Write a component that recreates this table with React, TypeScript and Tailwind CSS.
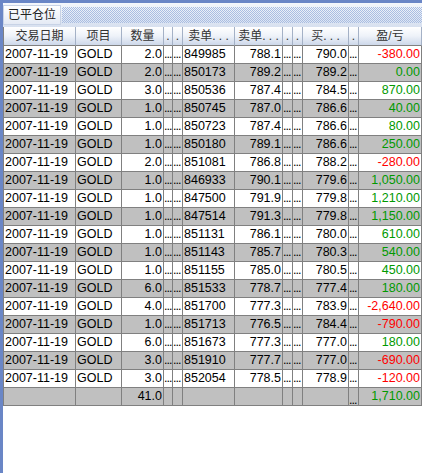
import React from "react";

type Row = {
  qty: string;
  order: string;
  sell: string;
  buy: string;
  pl: string;
};

const rows: Row[] = [
  { qty: "2.0", order: "849985", sell: "788.1", buy: "790.0", pl: "-380.00" },
  { qty: "2.0", order: "850173", sell: "789.2", buy: "789.2", pl: "0.00" },
  { qty: "3.0", order: "850536", sell: "787.4", buy: "784.5", pl: "870.00" },
  { qty: "1.0", order: "850745", sell: "787.0", buy: "786.6", pl: "40.00" },
  { qty: "1.0", order: "850723", sell: "787.4", buy: "786.6", pl: "80.00" },
  { qty: "1.0", order: "850180", sell: "789.1", buy: "786.6", pl: "250.00" },
  { qty: "2.0", order: "851081", sell: "786.8", buy: "788.2", pl: "-280.00" },
  { qty: "1.0", order: "846933", sell: "790.1", buy: "779.6", pl: "1,050.00" },
  { qty: "1.0", order: "847500", sell: "791.9", buy: "779.8", pl: "1,210.00" },
  { qty: "1.0", order: "847514", sell: "791.3", buy: "779.8", pl: "1,150.00" },
  { qty: "1.0", order: "851131", sell: "786.1", buy: "780.0", pl: "610.00" },
  { qty: "1.0", order: "851143", sell: "785.7", buy: "780.3", pl: "540.00" },
  { qty: "1.0", order: "851155", sell: "785.0", buy: "780.5", pl: "450.00" },
  { qty: "6.0", order: "851533", sell: "778.7", buy: "777.4", pl: "180.00" },
  { qty: "4.0", order: "851700", sell: "777.3", buy: "783.9", pl: "-2,640.00" },
  { qty: "1.0", order: "851713", sell: "776.5", buy: "784.4", pl: "-790.00" },
  { qty: "6.0", order: "851673", sell: "777.3", buy: "777.0", pl: "180.00" },
  { qty: "3.0", order: "851910", sell: "777.7", buy: "777.0", pl: "-690.00" },
  { qty: "3.0", order: "852054", sell: "778.5", buy: "778.9", pl: "-120.00" },
];

const headers = ["交易日期", "项目", "数量", ".", ".", "卖单. . .", "卖单. . .", ".", ".", "买. . .", ".", "盈/亏"];

const grid =
  "grid grid-cols-[72px_46px_42px_9px_10px_52px_48px_10px_10px_46px_10px_63px]";

function Cell({ children, right }: { children?: React.ReactNode; right?: boolean }) {
  return (
    <div
      className={`h-[18px] overflow-hidden whitespace-nowrap border-r border-b border-[#808080] leading-[17px] ${
        right ? "pr-[1px] text-right" : "pl-[1px]"
      }`}
    >
      {children}
    </div>
  );
}

function Dots({ bottom }: { bottom?: boolean }) {
  return (
    <div className="h-[18px] overflow-hidden whitespace-nowrap border-r border-b border-[#808080] leading-[17px] tracking-[-1px]">
      <span className={bottom ? "relative top-[4px]" : ""}>...</span>
    </div>
  );
}

export default function App() {
  return (
    <div
      className="flex h-[473px] w-[422px] flex-col bg-white text-black"
      style={{ fontFamily: '"Liberation Sans", "Noto Sans CJK SC", sans-serif' }}
    >
      <div className="h-[3px] bg-[#6a86c6]" />
      <div className="flex flex-1">
        <div className="w-[3px] bg-[#6a86c6]" />
        <div className="flex flex-1 flex-col">
          {/* title bar */}
          <div className="flex h-[24px] bg-gradient-to-b from-[#f4f7fc] to-[#d7e0ef]">
            <div className="mt-[2px] mb-[2px] flex items-center border border-[#c8d3e6] bg-gradient-to-b from-[#ffffff] to-[#e4eaf5] px-[4px] text-[12px] text-[#222]">
              已平仓位
            </div>
            <div className="my-[4px] ml-[1px] flex-1 bg-[conic-gradient(#a9bde2_25%,transparent_0_50%,#a9bde2_0_75%,transparent_0)] bg-size-[2px_2px]" />
          </div>

          {/* table */}
          <div className="border-l border-[#808080] text-[12.5px]">
            <div className={grid}>
              {headers.map((h, i) => (
                <div
                  key={i}
                  className="h-[19px] overflow-hidden whitespace-nowrap border-r border-b border-r-[#a4b1c6] border-b-[#808080] bg-gradient-to-b from-[#ffffff] via-[#eef2f9] to-[#cdd8ea] text-center text-[12px] leading-[18px] text-[#333]"
                >
                  {h}
                </div>
              ))}
            </div>
            {rows.map((r, i) => (
              <div key={i} className={`${grid} ${i % 2 === 1 ? "bg-[#c0c0c0]" : "bg-white"}`}>
                <Cell>2007-11-19</Cell>
                <Cell>GOLD</Cell>
                <Cell right>{r.qty}</Cell>
                <Dots />
                <Dots />
                <Cell>{r.order}</Cell>
                <Cell right>{r.sell}</Cell>
                <Dots />
                <Dots />
                <Cell right>{r.buy}</Cell>
                <Dots />
                <Cell right>
                  <span className={r.pl.startsWith("-") ? "text-[#ff0000]" : "text-[#009900]"}>{r.pl}</span>
                </Cell>
              </div>
            ))}
            <div className={`${grid} bg-[#c0c0c0]`}>
              <Cell />
              <Cell />
              <Cell right>41.0</Cell>
              <Cell />
              <Cell />
              <Cell />
              <Cell />
              <Cell />
              <Cell />
              <Cell />
              <Dots bottom />
              <Cell right>
                <span className="text-[#009900]">1,710.00</span>
              </Cell>
            </div>
          </div>
        </div>
      </div>
    </div>
  );
}
